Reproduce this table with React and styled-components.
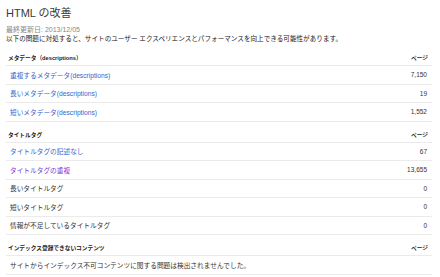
import React from 'react';
import styled, { createGlobalStyle } from 'styled-components';

const GlobalStyle = createGlobalStyle`
	html, body {
		margin: 0;
		padding: 0;
		background: #fff;
	}
	body {
		font-family: "Liberation Sans", Arial, "Noto Sans CJK JP", sans-serif;
		color: #222;
	}
`;

const Page = styled.div`
	width: 440px;
	box-sizing: border-box;
	padding: 6px 8px 0 6px;
`;

const Title = styled.h1`
	margin: 0;
	font-size: 11px;
	line-height: 14px;
	font-weight: normal;
	color: #3a3a3a;
`;

const Updated = styled.div`
	margin-top: 5px;
	font-size: 7px;
	line-height: 9px;
	color: #888;
`;

const Description = styled.p`
	margin: 0;
	font-size: 6.6px;
	line-height: 9px;
	color: #222;
`;

const Section = styled.section`
	margin-top: ${(p) => (p.$first ? '7px' : '5px')};
`;

const HeaderRow = styled.div`
	display: flex;
	align-items: center;
	justify-content: space-between;
	height: 16px;
	box-sizing: border-box;
	padding: 0 4px 0 2px;
	border-bottom: 1px solid #ebebeb;
	font-size: 5.7px;
	font-weight: bold;
	color: #222;
`;

const Row = styled.div`
	display: flex;
	align-items: center;
	justify-content: space-between;
	height: 18.5px;
	box-sizing: border-box;
	padding: 0 5px 0 4px;
	border-bottom: 1px solid #ebebeb;
	font-size: 6.7px;
`;

const Label = styled.span`
	color: ${(p) => (p.$visited ? '#7a3ad6' : p.$link ? '#3366cc' : '#333')};
	cursor: ${(p) => (p.$link ? 'pointer' : 'default')};
`;

const Count = styled.span`
	font-size: 6.5px;
	color: #333;
`;

const sections = [
	{
		title: 'メタデータ（descriptions）',
		rows: [
			{ label: '重複するメタデータ(descriptions)', count: '7,150', link: true },
			{ label: '長いメタデータ(descriptions)', count: '19', link: true },
			{ label: '短いメタデータ(descriptions)', count: '1,552', link: true },
		],
	},
	{
		title: 'タイトルタグ',
		rows: [
			{ label: 'タイトルタグの記述なし', count: '67', link: true },
			{ label: 'タイトルタグの重複', count: '13,655', link: true, visited: true },
			{ label: '長いタイトルタグ', count: '0' },
			{ label: '短いタイトルタグ', count: '0' },
			{ label: '情報が不足しているタイトルタグ', count: '0' },
		],
	},
	{
		title: 'インデックス登録できないコンテンツ',
		rows: [{ label: 'サイトからインデックス不可コンテンツに関する問題は検出されませんでした。' }],
	},
];

export default function App() {
	return (
		<>
			<GlobalStyle />
			<Page>
				<Title>HTML の改善</Title>
				<Updated>最終更新日: 2013/12/05</Updated>
				<Description>
					以下の問題に対処すると、サイトのユーザー エクスペリエンスとパフォーマンスを向上できる可能性があります。
				</Description>

				{sections.map((section, i) => (
					<Section key={section.title} $first={i === 0}>
						<HeaderRow>
							<span>{section.title}</span>
							<span>ページ</span>
						</HeaderRow>
						{section.rows.map((row) => (
							<Row key={row.label}>
								<Label $link={row.link} $visited={row.visited}>
									{row.label}
								</Label>
								{row.count && <Count>{row.count}</Count>}
							</Row>
						))}
					</Section>
				))}
			</Page>
		</>
	);
}
